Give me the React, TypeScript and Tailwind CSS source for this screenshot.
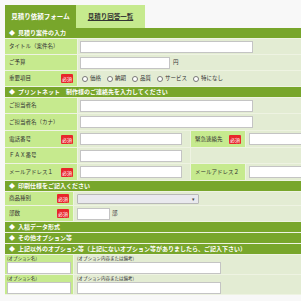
import React from 'react';

const font = { fontFamily: '"Noto Sans CJK JP", "Noto Sans", sans-serif' };

function Badge() {
  return (
    <span className="inline-flex items-center justify-center w-[12px] h-[9px] rounded-[1px] bg-[#e8262b] text-white text-[5px] leading-none">
      必須
    </span>
  );
}

function Header({ children }: { children: React.ReactNode }) {
  return (
    <div className="h-[11px] bg-[#78a62b] border-b border-[#eef3e2] flex items-center pl-[4px] text-white font-bold text-[6px] leading-none whitespace-nowrap">
      <span className="mr-[3px]">◆</span>
      {children}
    </div>
  );
}

function Input({ w }: { w: string }) {
  return <div className={`${w} h-[12px] bg-white border border-[#c4c4c4]`} />;
}

function Label({ text, req, w }: { text: string; req?: boolean; w: string }) {
  return (
    <div className={`${w} shrink-0 bg-[#c6ea8e] border-r border-[#eef3e2] flex items-center justify-between pl-[4px] pr-[4px] text-[5.5px] text-[#333] whitespace-nowrap`}>
      <span>{text}</span>
      {req && <Badge />}
    </div>
  );
}

function Radio({ label }: { label: string }) {
  return (
    <span className="inline-flex items-center mr-[6px]">
      <span className="w-[6px] h-[6px] rounded-full border border-[#777] bg-white mr-[2px]" />
      {label}
    </span>
  );
}

export default function App() {
  return (
    <div className="w-[301px] h-[301px] overflow-hidden bg-[#f8f8f8] pt-[5px] pl-[5px]" style={font}>
      <div className="w-[560px]">
        {/* タブ */}
        <div className="flex h-[23px]">
          <div className="w-[71px] bg-[#78a62b] text-white font-bold text-[6.5px] flex items-center justify-center">見積り依頼フォーム</div>
          <div className="w-[69px] bg-[#c6ea8e] text-[#333] font-bold text-[6.5px] flex items-center justify-center underline">見積り回答一覧</div>
        </div>

        <Header>見積り案件の入力</Header>
        <div className="flex h-[16px] border-b border-[#eef3e2]">
          <Label text="タイトル（案件名）" w="w-[73px]" />
          <div className="flex-1 bg-[#e3ecd3] flex items-center pl-[2px]"><Input w="w-[173px]" /></div>
        </div>
        <div className="flex h-[16px] border-b border-[#eef3e2]">
          <Label text="ご予算" w="w-[73px]" />
          <div className="flex-1 bg-[#e3ecd3] flex items-center pl-[2px] text-[5.5px] text-[#333]">
            <Input w="w-[90px]" />
            <span className="ml-[3px]">円</span>
          </div>
        </div>
        <div className="flex h-[16px] border-b border-[#eef3e2]">
          <Label text="重要項目" req w="w-[73px]" />
          <div className="flex-1 bg-[#e3ecd3] flex items-center pl-[4px] text-[5.5px] text-[#333]">
            <Radio label="価格" />
            <Radio label="納期" />
            <Radio label="品質" />
            <Radio label="サービス" />
            <Radio label="特になし" />
          </div>
        </div>

        <Header>プリントネット　制作様のご連絡先を入力してください</Header>
        <div className="flex h-[16px] border-b border-[#eef3e2]">
          <Label text="ご担当者名" w="w-[73px]" />
          <div className="flex-1 bg-[#e3ecd3] flex items-center pl-[2px]"><Input w="w-[173px]" /></div>
        </div>
        <div className="flex h-[17px] border-b border-[#eef3e2]">
          <Label text="ご担当者名（カナ）" w="w-[73px]" />
          <div className="flex-1 bg-[#e3ecd3] flex items-center pl-[2px]"><Input w="w-[173px]" /></div>
        </div>
        <div className="flex h-[17px] border-b border-[#eef3e2]">
          <Label text="電話番号" req w="w-[73px]" />
          <div className="w-[113px] bg-[#e3ecd3] border-r border-[#eef3e2] flex items-center pl-[2px]"><Input w="w-[102px]" /></div>
          <Label text="緊急連絡先" req w="w-[55px]" />
          <div className="flex-1 bg-[#e3ecd3] flex items-center pl-[3px]"><Input w="w-[120px]" /></div>
        </div>
        <div className="flex h-[16px] border-b border-[#eef3e2]">
          <Label text="ＦＡＸ番号" w="w-[73px]" />
          <div className="w-[113px] bg-[#e3ecd3] border-r border-[#eef3e2] flex items-center pl-[2px]"><Input w="w-[102px]" /></div>
          <div className="flex-1 bg-[#e3ecd3]" />
        </div>
        <div className="flex h-[17px] border-b border-[#eef3e2]">
          <Label text="メールアドレス１" req w="w-[73px]" />
          <div className="w-[113px] bg-[#e3ecd3] border-r border-[#eef3e2] flex items-center pl-[2px]"><Input w="w-[102px]" /></div>
          <Label text="メールアドレス２" w="w-[55px]" />
          <div className="flex-1 bg-[#e3ecd3] flex items-center pl-[3px]"><Input w="w-[120px]" /></div>
        </div>

        <Header>印刷仕様をご記入ください</Header>
        <div className="flex h-[14px] border-b border-[#eef3e2]">
          <Label text="商品種別" req w="w-[69px]" />
          <div className="flex-1 bg-[#e3ecd3] flex items-center pl-[3px]">
            <div className="w-[122px] h-[10px] bg-[#e9e9ee] border border-[#b8b8b8] rounded-[1px] flex items-center justify-end pr-[3px] text-[5px] text-[#444]">▾</div>
          </div>
        </div>
        <div className="flex h-[16px] border-b border-[#eef3e2]">
          <Label text="部数" req w="w-[69px]" />
          <div className="flex-1 bg-[#e3ecd3] flex items-center pl-[3px] text-[5.5px] text-[#333]">
            <Input w="w-[33px]" />
            <span className="ml-[2px]">部</span>
          </div>
        </div>

        <Header>入稿データ形式</Header>
        <Header>その他オプション等</Header>
        <Header>上記以外のオプション等（上記にないオプション等がありましたら、ご記入下さい）</Header>
        {[0, 1].map((i) => (
          <div key={i} className="flex h-[20px] border-b border-[#eef3e2]">
            <div className="w-[69px] shrink-0 bg-[#c6ea8e] border-r border-[#eef3e2] pl-[2px] pt-[1px] text-[4.5px] text-[#333] leading-none">
              <div className="mb-[1px]">(オプション名)</div>
              <Input w="w-[64px]" />
            </div>
            <div className="flex-1 bg-[#e3ecd3] pl-[3px] pt-[1px] text-[4.5px] text-[#333] leading-none">
              <div className="mb-[1px]">(オプション内容または備考)</div>
              <Input w="w-[144px]" />
            </div>
          </div>
        ))}
      </div>
    </div>
  );
}
